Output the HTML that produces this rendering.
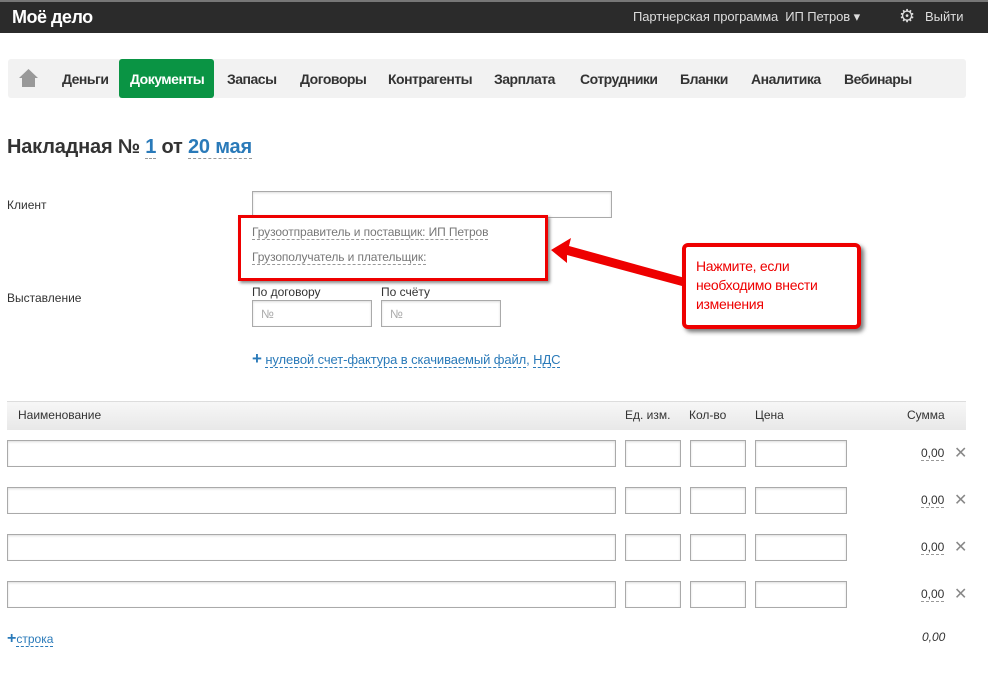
<!DOCTYPE html>
<html><head><meta charset="utf-8"><style>
body{margin:0;width:988px;height:684px;background:#fff;font-family:"Liberation Sans",sans-serif;color:#333;position:relative;overflow:hidden}
.a{position:absolute}
.hdr{left:0;top:0;width:988px;height:31px;background:#2b2b2b;border-top:2px solid #777}
.nav{left:8px;top:59px;width:958px;height:39px;background:#f2f2f2;border-radius:3px}
.nav span{position:absolute;top:12px;font-size:14px;font-weight:bold;color:#333;letter-spacing:-0.5px}
.inp{position:absolute;border:1px solid #aaa;background:#fff;box-sizing:border-box;box-shadow:inset 0 1px 2px #ddd}
.lbl{font-size:12px;color:#333}
.dash{border-bottom:1px dashed #999}
.blue{color:#2a7ab9}
.x{font-size:16px;color:#888}
</style></head><body>
<div class="a hdr"></div>
<div class="a" style="left:12px;top:7px;color:#fff;font-size:18px;font-weight:bold;letter-spacing:-0.5px">Моё дело</div>
<div class="a" style="left:633px;top:9px;color:#ddd;font-size:13px;letter-spacing:-0.1px">Партнерская программа &nbsp;ИП Петров ▾</div>
<div class="a" style="left:899px;top:6px;color:#ddd;font-size:18px">⚙</div>
<div class="a" style="left:925px;top:9px;color:#ddd;font-size:13px">Выйти</div>
<div class="a nav">
<svg style="position:absolute;left:11px;top:10px" width="19" height="18"><path d="M9.5 0L0 9h3v9h13V9h3z" fill="#999"/></svg>
<div style="position:absolute;left:111px;top:0;width:95px;height:39px;background:#0a9444;border-radius:3px"></div>
<span style="left:54px">Деньги</span><span style="left:122px;color:#fff">Документы</span><span style="left:219px">Запасы</span><span style="left:292px">Договоры</span><span style="left:380px">Контрагенты</span><span style="left:486px">Зарплата</span><span style="left:572px">Сотрудники</span><span style="left:672px">Бланки</span><span style="left:743px">Аналитика</span><span style="left:836px">Вебинары</span>
</div>
<div class="a" style="left:7px;top:136px;font-size:20px;font-weight:bold;letter-spacing:-0.2px">Накладная № <span class="blue dash">1</span> от <span class="blue dash">20 мая</span></div>
<div class="a lbl" style="left:7px;top:198px">Клиент</div>
<div class="inp" style="left:252px;top:191px;width:360px;height:27px"></div>
<div class="a lbl dash" style="left:252px;top:225px;color:#777;letter-spacing:-0.1px">Грузоотправитель и поставщик: ИП Петров</div>
<div class="a lbl dash" style="left:252px;top:250px;color:#777;letter-spacing:-0.1px">Грузополучатель и плательщик:</div>
<div class="a" style="left:238px;top:215px;width:304px;height:60px;border:3px solid #e00;box-shadow:2px 2px 3px #888"></div>
<svg class="a" style="left:545px;top:230px" width="145" height="60"><path d="M6 20L26 8L24 16L140 48L137 56L22 25L22 33Z" fill="#e00"/></svg>
<div class="a" style="left:682px;top:243px;width:171px;height:78px;border:4px solid #e00;border-radius:6px;background:#fff;box-shadow:3px 3px 4px #777"></div>
<div class="a" style="left:696px;top:257px;font-size:14px;color:#e00;line-height:19px;letter-spacing:-0.3px">Нажмите, если<br>необходимо внести<br>изменения</div>
<div class="a lbl" style="left:7px;top:291px">Выставление</div>
<div class="a lbl" style="left:252px;top:285px">По договору</div>
<div class="a lbl" style="left:381px;top:285px">По счёту</div>
<div class="inp" style="left:252px;top:300px;width:120px;height:27px;color:#aaa;font-size:12px;padding:6px 8px">№</div>
<div class="inp" style="left:381px;top:300px;width:120px;height:27px;color:#aaa;font-size:12px;padding:6px 8px">№</div>
<div class="a blue" style="left:252px;top:349px;font-size:13px;letter-spacing:-0.1px"><b style="font-size:17px">+</b> <span class="dash" style="border-color:#2a7ab9">нулевой счет-фактура в скачиваемый файл</span>, <span class="dash" style="border-color:#2a7ab9">НДС</span></div>
<div class="a" style="left:7px;top:401px;width:959px;height:28px;background:linear-gradient(#f7f7f7,#e8e8e8);border-top:1px solid #ddd"></div>
<div class="a lbl" style="left:18px;top:408px">Наименование</div>
<div class="a lbl" style="left:625px;top:408px">Ед. изм.</div>
<div class="a lbl" style="left:689px;top:408px">Кол-во</div>
<div class="a lbl" style="left:755px;top:408px">Цена</div>
<div class="a lbl" style="left:907px;top:408px">Сумма</div>
<div id="rows"></div>
<script>
var h='';[440,487,534,581].forEach(function(y){h+='<div class="inp" style="left:7px;top:'+y+'px;width:609px;height:27px"></div><div class="inp" style="left:625px;top:'+y+'px;width:56px;height:27px"></div><div class="inp" style="left:690px;top:'+y+'px;width:56px;height:27px"></div><div class="inp" style="left:755px;top:'+y+'px;width:92px;height:27px"></div><div class="a lbl dash" style="left:921px;top:'+(y+6)+'px">0,00</div><div class="a x" style="left:954px;top:'+(y+3)+'px">✕</div>'});document.getElementById('rows').innerHTML=h;
</script>
<div class="a blue" style="left:7px;top:630px;font-size:12px"><b style="font-size:16px">+</b><span class="dash" style="border-color:#2a7ab9">строка</span></div>
<div class="a lbl" style="left:922px;top:630px;font-style:italic">0,00</div>
</body></html>
